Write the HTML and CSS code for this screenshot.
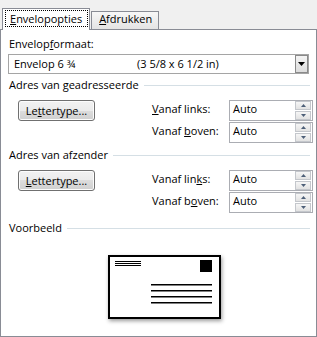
FILE: index.html
```html
<!DOCTYPE html>
<html lang="nl">
<head>
    <meta charset="UTF-8">
    <meta name="viewport" content="width=device-width, initial-scale=1.0">
    <title>Enveloppen</title>
    <link rel="stylesheet" href="styles.css">
</head>
<body>
    <div class="tabs">
        <div class="tab tab-active"><span class="focus"><u>E</u>nvelopopties</span></div>
        <div class="tab"><u>A</u>fdrukken</div>
    </div>
    <div class="panel">
        <div class="field-label">Envelop<u>f</u>ormaat:</div>
        <div class="select">
            <span class="select-name">Envelop 6 ¾</span>
            <span>(3 5/8 x 6 1/2 in)</span>
            <span class="select-btn">
                <svg width="7" height="4" viewBox="0 0 7 4"><polygon points="0,0 7,0 3.5,4" fill="#000"/></svg>
            </span>
        </div>

        <div class="group-head">Adres van geadresseerde</div>
        <div class="group">
            <button class="btn" type="button">Le<u>t</u>tertype...</button>
            <div class="fields">
                <div class="row">
                    <label class="row-label"><u>V</u>anaf links:</label>
                    <div class="spin">
                        <span class="spin-value">Auto</span>
                        <span class="spin-btns">
                            <span class="spin-up"><svg width="5" height="3" viewBox="0 0 5 3"><polygon points="0,3 5,3 2.5,0"/></svg></span>
                            <span class="spin-down"><svg width="5" height="3" viewBox="0 0 5 3"><polygon points="0,0 5,0 2.5,3"/></svg></span>
                        </span>
                    </div>
                </div>
                <div class="row">
                    <label class="row-label">Vanaf <u>b</u>oven:</label>
                    <div class="spin">
                        <span class="spin-value">Auto</span>
                        <span class="spin-btns">
                            <span class="spin-up"><svg width="5" height="3" viewBox="0 0 5 3"><polygon points="0,3 5,3 2.5,0"/></svg></span>
                            <span class="spin-down"><svg width="5" height="3" viewBox="0 0 5 3"><polygon points="0,0 5,0 2.5,3"/></svg></span>
                        </span>
                    </div>
                </div>
            </div>
        </div>

        <div class="group-head">Adres van afzender</div>
        <div class="group">
            <button class="btn" type="button"><u>L</u>ettertype...</button>
            <div class="fields">
                <div class="row">
                    <label class="row-label">Vanaf lin<u>k</u>s:</label>
                    <div class="spin">
                        <span class="spin-value">Auto</span>
                        <span class="spin-btns">
                            <span class="spin-up"><svg width="5" height="3" viewBox="0 0 5 3"><polygon points="0,3 5,3 2.5,0"/></svg></span>
                            <span class="spin-down"><svg width="5" height="3" viewBox="0 0 5 3"><polygon points="0,0 5,0 2.5,3"/></svg></span>
                        </span>
                    </div>
                </div>
                <div class="row">
                    <label class="row-label">Vanaf b<u>o</u>ven:</label>
                    <div class="spin">
                        <span class="spin-value">Auto</span>
                        <span class="spin-btns">
                            <span class="spin-up"><svg width="5" height="3" viewBox="0 0 5 3"><polygon points="0,3 5,3 2.5,0"/></svg></span>
                            <span class="spin-down"><svg width="5" height="3" viewBox="0 0 5 3"><polygon points="0,0 5,0 2.5,3"/></svg></span>
                        </span>
                    </div>
                </div>
            </div>
        </div>

        <div class="group-head group-head-last">Voorbeeld</div>
        <div class="preview">
            <svg width="113" height="64" viewBox="0 0 113 64">
                <rect x="1" y="1" width="111" height="62" fill="#fff" stroke="#000" stroke-width="2"/>
                <rect x="7" y="6" width="26" height="1" fill="#000"/>
                <rect x="7" y="8" width="26" height="1" fill="#000"/>
                <rect x="7" y="10" width="26" height="1" fill="#000"/>
                <rect x="92" y="5" width="12" height="12" fill="#000"/>
                <rect x="43" y="29" width="61" height="1.5" fill="#000"/>
                <rect x="43" y="35" width="61" height="1.5" fill="#000"/>
                <rect x="43" y="41" width="61" height="1.5" fill="#000"/>
                <rect x="43" y="47" width="61" height="1.5" fill="#000"/>
            </svg>
        </div>
    </div>
</body>
</html>
```

FILE: styles.css
```css
body {
    margin: 0;
    background-color: #f0f0f0;
    font-family: "Open Sans", "Noto Sans", sans-serif;
    font-size: 11px;
    color: #000;
}
u {
    text-decoration: underline;
    text-underline-offset: 1px;
}
.tabs {
    display: flex;
    align-items: flex-end;
    height: 29px;
    padding-left: 2px;
}
.tab {
    box-sizing: border-box;
    height: 18px;
    padding: 0 6px 0 7px;
    line-height: 14px;
    border: 1px solid #898c95;
    border-bottom: none;
    background: linear-gradient(#f7f7f7, #e4e4e4);
}
.tab-active {
    position: relative;
    z-index: 1;
    height: 22px;
    margin-bottom: -1px;
    margin-right: 1px;
    padding: 1px 1px 0 2px;
    background: #fff;
}
.focus {
    display: inline-block;
    line-height: 15px;
    padding: 0 5px 0 4px;
    border: 1px dotted #000;
}
.panel {
    box-sizing: border-box;
    height: 308px;
    padding: 0 3px 0 8px;
    background-color: #fff;
    border: 1px solid #898c95;
}
.field-label {
    margin-top: 6px;
    line-height: 16px;
}
.select {
    box-sizing: border-box;
    display: flex;
    align-items: center;
    width: 301px;
    height: 20px;
    margin: 2px 0 0 -1px;
    padding-left: 5px;
    line-height: 18px;
    border: 1px solid #a5a5a5;
}
.select-name {
    display: inline-block;
    width: 123px;
}
.select-btn {
    box-sizing: border-box;
    display: flex;
    align-items: center;
    justify-content: center;
    width: 13px;
    height: 18px;
    margin-left: auto;
    border: 1px solid #8a8a8a;
    background: linear-gradient(#f4f4f4, #dcdcdc);
}
.group-head {
    display: flex;
    height: 16px;
    line-height: 16px;
    margin: 3px 3px 0 0;
}
.group-head::after {
    content: "";
    flex: 1;
    height: 1px;
    margin: 8px 0 0 5px;
    background-color: #d5dfe5;
}
.group + .group-head {
    margin-top: 4px;
}
.group-head-last {
    margin-top: 7px !important;
}
.group {
    display: flex;
    justify-content: space-between;
    margin-top: 7px;
}
.btn {
    box-sizing: border-box;
    width: 77px;
    height: 21px;
    margin-left: 9px;
    padding: 0;
    font-family: inherit;
    font-size: 11px;
    line-height: 19px;
    color: #000;
    border: 1px solid #707070;
    border-radius: 3px;
    background: linear-gradient(#f2f2f2 0%, #ebebeb 50%, #dddddd 50%, #cfcfcf 100%);
    box-shadow: inset 0 0 0 1px #fcfcfc;
}
.fields {
    display: flex;
    flex-direction: column;
    gap: 1px;
}
.row {
    display: flex;
    align-items: flex-start;
}
.row-label {
    width: 77px;
    line-height: 17px;
}
.spin {
    box-sizing: border-box;
    display: flex;
    width: 84px;
    height: 21px;
    padding-left: 3px;
    border: 1px solid #abadb3;
}
.spin-value {
    flex: 1;
    line-height: 15px;
}
.spin-btns {
    display: flex;
    flex-direction: column;
    width: 16px;
    margin-right: 1px;
}
.spin-up, .spin-down {
    box-sizing: border-box;
    display: flex;
    align-items: center;
    justify-content: center;
    height: 9px;
    border: 1px solid #c4c7cc;
    background: linear-gradient(#f6f6f6, #e2e2e2);
}
.spin-up {
    margin-bottom: 1px;
}
.spin-btns svg {
    fill: #4d5f78;
}
.preview {
    width: 113px;
    height: 64px;
    margin: 19px 0 0 99px;
    box-shadow: 1px 2px 4px rgba(0, 0, 0, 0.4);
}
.preview svg {
    display: block;
}
```
